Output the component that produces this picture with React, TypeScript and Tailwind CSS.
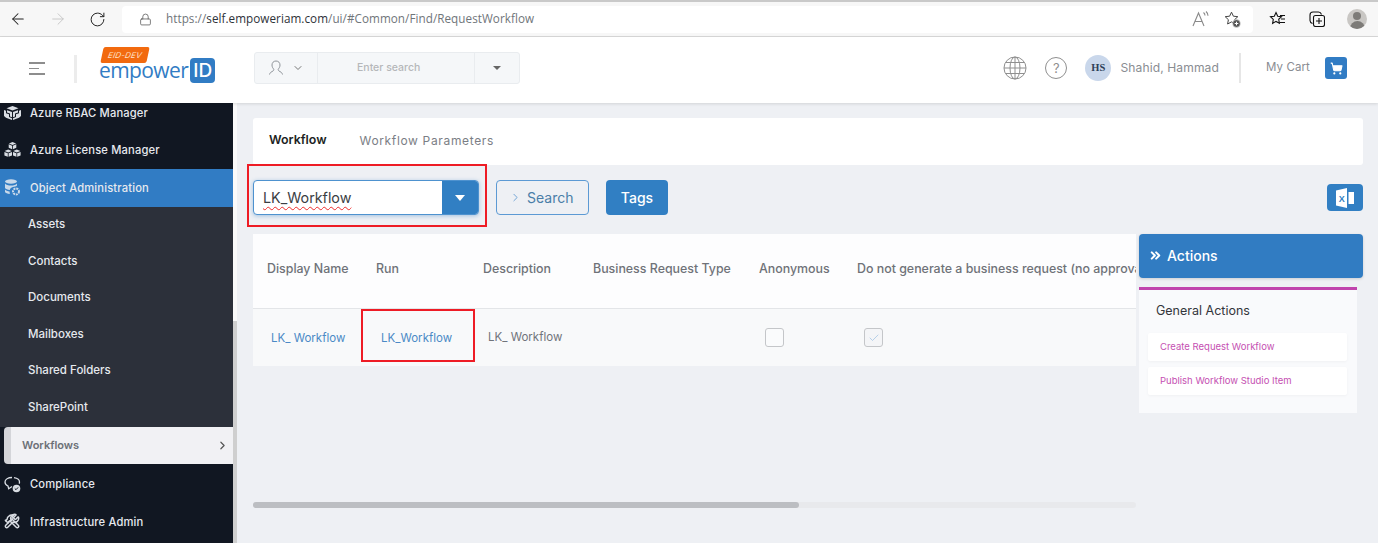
import React from "react";
import { ArrowLeft, ArrowRight, RotateCw, Lock, ChevronDown, ChevronRight, ShoppingCart, Check, ChevronsRight, Wrench, Hammer } from "lucide-react";

const sub = ["Assets", "Contacts", "Documents", "Mailboxes", "Shared Folders", "SharePoint"];

function Globe() {
  return (
    <svg width="24" height="24" viewBox="0 0 24 24" fill="none" stroke="#8f8f8f" strokeWidth="1">
      <circle cx="12" cy="12" r="11" />
      <ellipse cx="12" cy="12" rx="5" ry="11" />
      <path d="M12 1v22M1 12h22M2.600 6.500h18.800M2.600 17.500h18.800" />
    </svg>
  );
}

function RBACIcon() {
  return (
    <svg width="17" height="14" viewBox="0 0 17 14" fill="#d9dde3">
      <path d="M8.500 0l6 2.200-6 2.300-6-2.300z" />
      <path d="M0 4l2 .8v2.400l3 1.100V11l3 1.200V14l-6-2.200L0 10zM17 4l-2 .8v2.400l-3 1.100V11l-3 1.200V14l6-2.200 2-1.800z" />
      <path d="M3 4.200l5 1.900v5.200l-2-.8V7.600l-3-1.100zM14 4.200L9 6.100v5.200l2-.8V7.600l3-1.100z" />
    </svg>
  );
}

function StackIcon() {
  return (
    <svg width="17" height="16" viewBox="0 0 17 16" fill="#d9dde3">
      <path d="M8.500 0l3.600 1.500L8.500 3 4.900 1.500zM4.700 2.300l3.400 1.400v3.500L4.700 5.800zM12.300 2.300L8.900 3.700v3.500l3.400-1.400z" />
      <path d="M4.200 7.600l3.600 1.500-3.600 1.500-3.600-1.500zM.4 9.900l3.400 1.400v3.500L.4 13.400zM8 9.900l-3.400 1.400v3.500L8 13.400z" />
      <path d="M12.800 7.600l3.600 1.500-3.600 1.500-3.600-1.500zM9 9.900l3.400 1.400v3.500L9 13.400zM16.600 9.900l-3.400 1.400v3.500l3.400-1.400z" />
    </svg>
  );
}

function DbGearIcon() {
  return (
    <svg width="17" height="17" viewBox="0 0 17 17" fill="#c9d9ea">
      <ellipse cx="7" cy="2.500" rx="6" ry="2.200" />
      <path d="M1 4.600c1 1.400 3.500 2 6 2s5-.6 6-2v2c-1 1-2.500 1.400-4 1.500-2 .8-3 1.700-3.200 2.800C3.500 10.800 1.600 10 1 9z" />
      <path d="M1 10.600c.8 1 2.500 1.700 4.600 1.900l.2 2.400C3.500 14.800 1.500 14 1 13z" />
      <circle cx="12" cy="12.500" r="3" fill="none" stroke="#c9d9ea" strokeWidth="2" strokeDasharray="2 .8" />
    </svg>
  );
}

function ComplianceIcon() {
  return (
    <svg width="17" height="17" viewBox="0 0 17 17" fill="none" stroke="#d9dde3" strokeWidth="1.300">
      <path d="M8 1.500c-3.800 0-7 1.800-7 4.500 0 1.800 1.200 3.200 3 4l.7 2.800L8 10.500" />
      <path d="M10 1.700c3 .5 5.500 2 5.500 4.300 0 .6-.1 1.100-.4 1.600" />
      <circle cx="12.500" cy="12.500" r="3.800" fill="#d9dde3" stroke="none" />
      <path d="M10.800 12.500l1.200 1.200 2.100-2.300" stroke="#111722" strokeWidth="1" />
    </svg>
  );
}

function ExcelIcon() {
  return (
    <svg width="18" height="20" viewBox="0 0 18 20" fill="#ffffff">
      <path d="M11 0v20L0 17.500v-15z" />
      <path d="M12.500 4H18v12h-5.500z" />
      <text x="2.800" y="13.500" fontSize="9" fontWeight="700" fill="#317fc3" fontFamily="'Liberation Sans', sans-serif">X</text>
    </svg>
  );
}

function ReadAloud() {
  return (
    <svg width="18" height="16" viewBox="0 0 18 16" fill="none" stroke="#8a8a8a" strokeWidth="1.100">
      <path d="M1 15L6.500 2 12 15M3 10.500h7" />
      <path d="M11.500 1.500c1 .8 1.500 1.900 1.500 3M14 .5c1.300 1.100 2 2.600 2 4.200" />
    </svg>
  );
}

function FavAdd() {
  return (
    <svg width="17" height="17" viewBox="0 0 17 17" fill="none" stroke="#444" strokeWidth="1">
      <path d="M7.500 1.200l1.900 4 4.400.5-3.200 3 .8 4.300-3.900-2.100-3.900 2.100.8-4.300-3.200-3 4.400-.5z" />
      <circle cx="12.500" cy="12.500" r="3.900" fill="#555" stroke="#f7f7f7" strokeWidth="0.600" />
      <path d="M12.500 10.700v3.600M10.700 12.500h3.600" stroke="#fff" />
    </svg>
  );
}

function Favorites() {
  return (
    <svg width="17" height="16" viewBox="0 0 17 16" fill="none" stroke="#111" strokeWidth="1.100">
      <path d="M7 1.500l1.700 3.700 3.800.4-2.800 2.700.7 4L7 10.400l-3.400 2 .7-4L1.500 5.600l3.800-.4z" />
      <path d="M11 4.500h5M12 8h4M10.500 11.500h5.500" />
    </svg>
  );
}

function Collections() {
  return (
    <svg width="16" height="16" viewBox="0 0 16 16" fill="none" stroke="#111" strokeWidth="1.100">
      <path d="M3.500 12.500C2 12 1 11 1 9.500V4c0-1.700 1.300-3 3-3h5.500C11 1 12 2 12.500 3.500" />
      <rect x="4.500" y="4.500" width="11" height="11" rx="2" />
      <path d="M10 7v6M7 10h6" />
    </svg>
  );
}

function Profile() {
  return (
    <div className="w-5 h-5 rounded-full bg-[#c9c7c4] overflow-hidden flex flex-col items-center">
      <div className="w-2 h-2 mt-[3px] rounded-full bg-[#7d7b78]" />
      <div className="w-[15px] h-2 mt-[1px] rounded-t-full bg-[#7d7b78]" />
    </div>
  );
}

function UserOutline() {
  return (
    <svg width="16" height="16" viewBox="0 0 16 16" fill="none" stroke="#8f949a" strokeWidth="1">
      <path d="M8 1c-2.500 0-4 1.800-4 4 0 1.800.7 3 1.700 4 .3.800 0 1.500-.7 2-1.500.8-3 1.400-3.500 3.500M8 1c2.500 0 4 1.800 4 4 0 1.800-.7 3-1.700 4-.3.800 0 1.500.7 2 1.500.8 3 1.400 3.500 3.500" />
    </svg>
  );
}

function NavRow({ icon, label, active }: { icon: React.ReactNode; label: string; active?: boolean }) {
  return (
    <div className={`h-[37.5px] shrink-0 flex items-center ${active ? "bg-[#317cc4]" : ""}`}>
      <div className="w-[30px] pl-1 shrink-0 flex items-center justify-start">{icon}</div>
      <span className="pt-[1px] text-[11.2px] tracking-[0.15px] font-medium text-[#e6e9ee]">{label}</span>
    </div>
  );
}

export default function App() {
  return (
    <div className="w-[1378px] h-[543px] overflow-hidden flex flex-col bg-white font-['Inter','Liberation_Sans',sans-serif]">
      {/* Browser chrome */}
      <div className="h-[37px] shrink-0 bg-[#f7f7f7] border-b border-[#d9d9d9] border-t-2 border-t-[#c9c9c9] flex items-center">
        <ArrowLeft size={18} strokeWidth={1.4} color="#222" className="ml-[9px]" />
        <ArrowRight size={18} strokeWidth={1.2} color="#c4c4c4" className="ml-[22px]" />
        <RotateCw size={17} strokeWidth={1.4} color="#222" className="ml-[22px]" />
        <div className="ml-[16px] w-[1131px] h-[27px] bg-white rounded-[4px] flex items-center">
          <Lock size={13} strokeWidth={1.4} color="#555" className="ml-[17px]" />
          <span className="ml-[14px] font-['Open_Sans',sans-serif] text-[11.7px] tracking-[0.05px] text-[#70757a]">
            https://<span className="text-[#2e3238]">self.empoweriam.com</span>/ui/#Common/Find/RequestWorkflow
          </span>
          <div className="ml-auto flex items-center gap-[14px] pr-[12px]">
            <ReadAloud />
            <FavAdd />
          </div>
        </div>
        <div className="ml-[16px]"><Favorites /></div>
        <div className="ml-[23px]"><Collections /></div>
        <div className="ml-[22px]"><Profile /></div>
      </div>

      {/* App header */}
      <div className="h-[66px] shrink-0 bg-white flex items-center relative z-10 shadow-[0_1px_3px_rgba(0,0,0,0.12)]">
        <div className="ml-[29px] mb-[3px] flex flex-col gap-[4px] w-[17px]">
          <div className="h-[1.500px] w-[16px] bg-[#8d8d8d]" />
          <div className="h-[1.500px] w-[10px] bg-[#8d8d8d]" />
          <div className="h-[1.500px] w-[16px] bg-[#8d8d8d]" />
        </div>
        <div className="ml-[28px] mb-[3px] w-[3px] h-[28px] bg-[#ececec]" />
        <div className="ml-[22px] mb-[11px] w-[119px] flex flex-col items-start">
          <div className="ml-[3px] w-[46px] h-[16px] bg-[#f26a0f] -skew-x-12 rounded-[2px] flex items-center justify-center">
            <span className="text-[8px] italic text-[#ffe3cc] tracking-[0.2px] leading-none">EID-DEV</span>
          </div>
          <div className="flex items-center mt-[-5px]">
            <span className="text-[21px] leading-[25px] text-[#317cc4] font-['Open_Sans',sans-serif] font-medium tracking-[-0.6px]">empower</span>
            <div className="ml-[2px] w-[25px] h-[25px] rounded-[4px] bg-[#317cc4] flex items-center justify-center">
              <span className="text-white text-[19px] font-medium leading-none">ID</span>
            </div>
          </div>
        </div>
        <div className="ml-[36px] mb-[4px] w-[266px] h-[32px] bg-[#f5f7f9] border border-[#e9ecef] rounded-[3px] flex items-center">
          <div className="w-[63px] h-full flex items-center pl-[13px] gap-[8px] border-r border-[#e9ecef]">
            <UserOutline />
            <ChevronDown size={12} color="#777" />
          </div>
          <div className="w-[157px] h-full flex items-center pl-[39px] border-r border-[#e9ecef]">
            <span className="text-[10.5px] text-[#b5b7ba] font-medium">Enter search</span>
          </div>
          <div className="flex-1 flex justify-center">
            <div className="w-0 h-0 border-l-[4px] border-r-[4px] border-t-[4px] border-l-transparent border-r-transparent border-t-[#666]" />
          </div>
        </div>
        <div className="ml-auto mb-[4px] flex items-center pr-[31px]">
          <Globe />
          <div className="ml-[18px] w-[22px] h-[22px] rounded-full border border-[#8f8f8f] flex items-center justify-center text-[13px] text-[#8f8f8f] leading-none">?</div>
          <div className="ml-[18px] w-[26px] h-[26px] rounded-full bg-[#c9d7eb] flex items-center justify-center">
            <span className="font-['Liberation_Serif',serif] font-bold text-[10.500px] text-[#2d3f58]">HS</span>
          </div>
          <span className="ml-[9px] text-[12.1px] tracking-[0.1px] text-[#8a8d92]">Shahid, Hammad</span>
          <div className="ml-[20px] w-[2px] h-[30px] bg-[#e6e6e6]" />
          <span className="ml-[25px] text-[11.5px] text-[#8a8d92] tracking-[0.1px]">My Cart</span>
          <div className="ml-[15px] w-[22px] h-[22px] rounded-[3px] bg-[#317cc4] flex items-center justify-center">
            <ShoppingCart size={13} color="#fff" fill="#fff" />
          </div>
        </div>
      </div>

      {/* Body */}
      <div className="flex-1 min-h-0 flex">
        {/* Sidebar */}
        <div className="w-[233px] shrink-0 bg-[#111722] overflow-hidden flex flex-col">
          <div className="-mt-[9px] flex flex-col">
            <NavRow icon={<RBACIcon />} label="Azure RBAC Manager" />
            <NavRow icon={<StackIcon />} label="Azure License Manager" />
            <NavRow icon={<DbGearIcon />} label="Object Administration" active />
            <div className="bg-[#2c303a] h-[220.5px] shrink-0 flex flex-col">
              {sub.map((s) => (
                <div key={s} className="h-[36.500px] shrink-0 flex items-center pl-[28px]">
                  <span className="text-[11.500px] font-medium text-[#e6e9ee]">{s}</span>
                </div>
              ))}
            </div>
            <div className="h-[37px] mb-[1.5px] shrink-0 ml-[4px] bg-[#f1f1f4] rounded-l-[4px] flex items-center border-l-[7px] border-l-[#d4d5d9] relative">
              <span className="ml-[11px] text-[11px] font-semibold text-[#6c7077]">Workflows</span>
              <ChevronRight size={13} strokeWidth={2.2} color="#555" className="ml-auto mr-[4px]" />
            </div>
            <NavRow icon={<ComplianceIcon />} label="Compliance" />
            <NavRow
              icon={
                <span className="relative block w-[17px] h-[17px]">
                  <Wrench size={16} color="#d9dde3" strokeWidth={2.200} className="absolute inset-0" />
                  <Hammer size={16} color="#d9dde3" strokeWidth={2.200} className="absolute inset-0 -scale-x-100" />
                </span>
              }
              label="Infrastructure Admin"
            />
          </div>
        </div>
        {/* Sidebar scrollbar */}
        <div className="w-[4px] shrink-0 bg-[#fafafa] flex flex-col">
          <div className="h-[218px] shrink-0" />
          <div className="flex-1 bg-[#cfcfcf]" />
        </div>

        {/* Main */}
        <div className="flex-1 min-w-0 bg-[#eef0f4] pl-[16px] pr-[15px] pt-[15px] flex flex-col">
          {/* Tabs */}
          <div className="h-[47px] shrink-0 bg-white rounded-[3px] flex items-center pl-[16px] pb-[2px] gap-[33px]">
            <span className="text-[12.4px] font-semibold text-[#1d1f24]">Workflow</span>
            <span className="text-[12px] tracking-[0.65px] text-[#7b7e85]">Workflow Parameters</span>
          </div>

          {/* Toolbar */}
          <div className="h-[69px] shrink-0 flex items-start pt-[15px] relative">
            <div className="absolute left-[-6px] top-[-1px] w-[240px] h-[63px] border-2 border-[#ee1c25] pointer-events-none" />
            <div className="w-[226px] h-[35px] rounded-[4px] border border-[#4e92cf] flex overflow-hidden bg-white shadow-[0_1px_4px_rgba(49,124,196,0.4)]">
              <div className="flex-1 flex items-center pl-[9px]">
                <span className="text-[14.3px] text-[#3b3e44] underline decoration-wavy decoration-[#ee2b2b] decoration-[1px] underline-offset-[3px]">LK_Workflow</span>
              </div>
              <div className="w-[36px] bg-[#317fc3] flex items-center justify-center">
                <div className="w-0 h-0 border-l-[5px] border-r-[5px] border-t-[6px] border-l-transparent border-r-transparent border-t-white" />
              </div>
            </div>
            <div className="ml-[17px] w-[93px] h-[35px] rounded-[4px] border border-[#5c9ad4] flex items-center pl-[12px] gap-[5px]">
              <ChevronRight size={13} strokeWidth={1.4} color="#4b8ecb" />
              <span className="text-[14px] text-[#4a7ea8]">Search</span>
            </div>
            <div className="ml-[17px] w-[62px] h-[35px] rounded-[4px] bg-[#317fc3] flex items-center justify-center">
              <span className="text-[14px] font-medium text-white">Tags</span>
            </div>
            <div className="ml-auto mt-[4px] w-[36px] h-[27px] rounded-[4px] bg-[#317fc3] flex items-center justify-center">
              <ExcelIcon />
            </div>
          </div>

          {/* Grid + actions */}
          <div className="flex-1 min-h-0 flex items-start gap-[3px]">
            <div className="w-[883px] shrink-0 flex flex-col">
              <div className="h-[132px] overflow-hidden bg-white flex flex-col relative">
                <div className="h-[75px] shrink-0 flex items-center pb-[4px] border-b border-[#e3e5e8] bg-[#fdfdfe] whitespace-nowrap text-[12.4px] font-medium text-[#6f7278]">
                  <div className="w-[123px] pl-[14px] shrink-0">Display Name</div>
                  <div className="w-[107px] shrink-0">Run</div>
                  <div className="w-[110px] shrink-0">Description</div>
                  <div className="w-[166px] shrink-0">Business Request Type</div>
                  <div className="w-[98px] shrink-0">Anonymous</div>
                  <div className="w-[279px] shrink-0 overflow-hidden">Do not generate a business request (no approvals required)</div>
                </div>
                <div className="flex-1 flex items-center bg-[#f8f9fa] whitespace-nowrap text-[11.500px]">
                  <div className="w-[109px] pl-[18px] pt-[2px] shrink-0 text-[#4b8ac6]">LK_ Workflow</div>
                  <div className="w-[125px] pl-[17px] pt-[2px] shrink-0 text-[#4b8ac6] self-stretch flex items-center border-2 border-transparent">LK_Workflow</div>
                  <div className="w-[272px] pl-[1px] pt-[1px] shrink-0 text-[#70747a]">LK_ Workflow</div>
                  <div className="w-[99px] pl-[6px] shrink-0">
                    <div className="w-[19px] h-[19px] rounded-[3px] border border-[#c4c6c9] bg-[#fafbfc]" />
                  </div>
                  <div className="pl-[6px] shrink-0">
                    <div className="w-[19px] h-[19px] rounded-[3px] border border-[#c4c6c9] bg-[#f4f5f7] flex items-center justify-center">
                      <Check size={12} strokeWidth={1.4} color="#9cc0e2" />
                    </div>
                  </div>
                </div>
                <div className="absolute left-[108px] top-[75px] w-[114px] h-[53px] border-[2.500px] border-[#ee1c25] pointer-events-none" />
              </div>
              <div className="mt-[136px] h-[6px] rounded-full bg-[#e8e9ec]">
                <div className="w-[546px] h-full rounded-full bg-[#bcbec2]" />
              </div>
            </div>

            <div className="w-[224px] shrink-0 flex flex-col">
              <div className="h-[44px] rounded-[4px] bg-[#317cc2] flex items-center pl-[9px] pb-[2px] gap-[4px] shadow-[0_1px_3px_rgba(0,0,0,0.15)]">
                <ChevronsRight size={15} strokeWidth={3.2} color="#fff" />
                <span className="text-[14px] font-medium text-white">Actions</span>
              </div>
              <div className="mt-[9px] w-[218px] h-[126px] bg-[#f9fafc] border-t-[3px] border-t-[#c043ad] px-[9px] flex flex-col">
                <span className="ml-[8px] mt-[13px] text-[12.500px] text-[#33363b] leading-[16px]">General Actions</span>
                <div className="mt-[14px] h-[28px] w-[199px] bg-white rounded-[2px] flex items-center pl-[12px] shadow-[0_1px_3px_rgba(0,0,0,0.04)]">
                  <span className="text-[9.500px] text-[#c550b2]">Create Request Workflow</span>
                </div>
                <div className="mt-[6px] h-[28px] w-[199px] bg-white rounded-[2px] flex items-center pl-[12px] shadow-[0_1px_3px_rgba(0,0,0,0.04)]">
                  <span className="text-[9.500px] text-[#c550b2]">Publish Workflow Studio Item</span>
                </div>
              </div>
            </div>
          </div>
        </div>
      </div>
    </div>
  );
}
